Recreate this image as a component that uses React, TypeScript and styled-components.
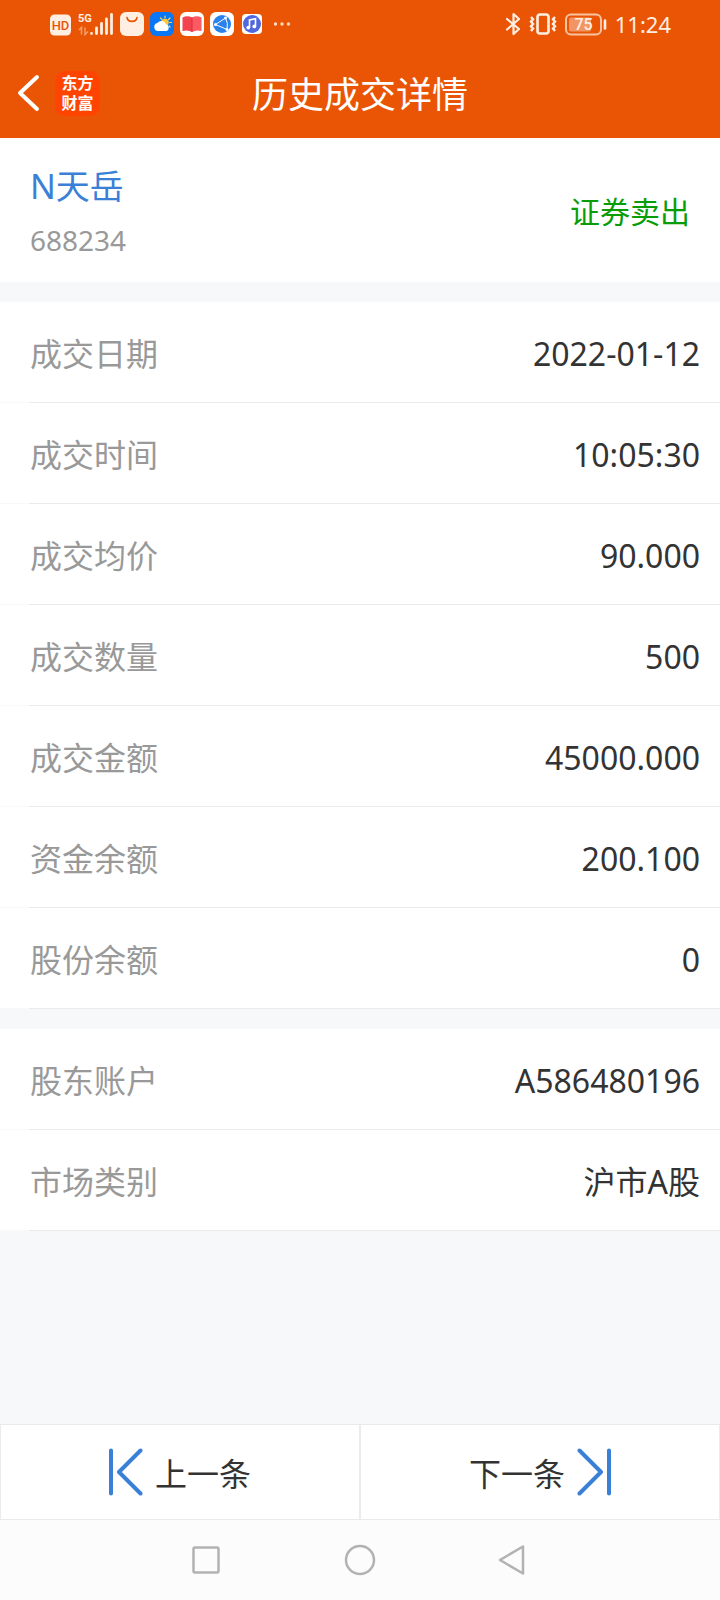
import React from "react";
import styled, { createGlobalStyle } from "styled-components";

const GlobalStyle = createGlobalStyle`
  *, *::before, *::after { box-sizing: border-box; }
  body {
    margin: 0;
    background: #f6f8fa;
    color: #333;
    font-family: "Noto Sans", "Noto Sans CJK SC", sans-serif;
  }
  button { font: inherit; color: inherit; cursor: pointer; }
  svg { display: block; flex: none; }
`;

const Screen = styled.div`
  display: flex;
  flex-direction: column;
  min-height: 100vh;
`;

const StatusBar = styled.div`
  display: flex;
  align-items: center;
  justify-content: space-between;
  height: 48px;
  padding: 0 49px 0 50px;
  background: #e95504;
  color: #ffeee2;
`;

const StatusGroup = styled.div<{ $gap: number }>`
  display: flex;
  align-items: center;
  gap: ${(p) => p.$gap}px;
`;

const Clock = styled.time`
  font-size: 22px;
  line-height: 24px;
`;

const Header = styled.header`
  display: grid;
  grid-template-columns: 1fr auto 1fr;
  align-items: center;
  height: 90px;
  padding: 0 16px;
  background: #e95504;
  color: #fff;
`;

const HeaderStart = styled.div`
  display: flex;
  align-items: center;
  gap: 15px;
`;

const PlainButton = styled.button`
  display: flex;
  align-items: center;
  justify-content: center;
  padding: 0;
  border: 0;
  background: none;
`;

const Brand = styled.div`
  display: flex;
  align-items: center;
  justify-content: center;
  width: 45px;
  height: 45px;
  border-radius: 10px;
  background: #ff4400;
  font-size: 16px;
  font-weight: 700;
  line-height: 20px;
  text-align: center;
`;

const Title = styled.h1`
  margin: 0;
  padding-top: 4px;
  font-size: 36px;
  font-weight: 400;
  line-height: 48px;
`;

const Main = styled.main`
  display: flex;
  flex: 1;
  flex-direction: column;
  gap: 20px;
`;

const Summary = styled.section`
  display: flex;
  align-items: center;
  justify-content: space-between;
  height: 144px;
  padding: 4px 30px 0;
  background: #fff;
`;

const StockName = styled.h2`
  margin: 0;
  color: #3a80d7;
  font-size: 34px;
  font-weight: 400;
  line-height: 56px;
`;

const StockCode = styled.p`
  margin: 0;
  color: #999;
  font-size: 28px;
  line-height: 52px;
`;

const Side = styled.strong`
  color: #099c09;
  font-size: 30px;
  font-weight: 400;
  line-height: 40px;
`;

const Details = styled.dl`
  margin: 0;
`;

const Row = styled.div`
  display: flex;
  align-items: center;
  justify-content: space-between;
  height: 101px;
  padding: 3px 20px 0 30px;
  border-bottom: 1px solid #ebebeb;
  border-image: linear-gradient(to right, #f9f9f9 30px, #ebebeb 30px) 1;
  background: #fff;
  font-size: 32px;
  line-height: 48px;
`;

const Label = styled.dt`
  color: #999;
`;

const Value = styled.dd`
  margin: 0;
`;

const Pager = styled.nav`
  display: flex;
`;

const PagerButton = styled.button`
  display: flex;
  flex: 1;
  align-items: center;
  justify-content: center;
  gap: 12px;
  height: 96px;
  padding: 0;
  border: 1px solid #ebebeb;
  background: #fff;
  font-size: 32px;
  line-height: 48px;
`;

const PagerText = styled.span`
  padding-top: 3px;
`;

const SystemBar = styled.nav`
  display: flex;
  justify-content: center;
  height: 80px;
  background: #fcfcfc;
`;

const SystemButton = styled(PlainButton)`
  width: 154px;
`;

const trade = [
  ["成交日期", "2022-01-12"],
  ["成交时间", "10:05:30"],
  ["成交均价", "90.000"],
  ["成交数量", "500"],
  ["成交金额", "45000.000"],
  ["资金余额", "200.100"],
  ["股份余额", "0"],
];

const account = [
  ["股东账户", "A586480196"],
  ["市场类别", "沪市A股"],
];

function DetailList({ items }: { items: string[][] }) {
  return (
    <Details>
      {items.map(([label, value]) => (
        <Row key={label}>
          <Label>{label}</Label>
          <Value>{value}</Value>
        </Row>
      ))}
    </Details>
  );
}

function HdIcon() {
  return (
    <svg width="22" height="24" viewBox="0 0 22 24">
      <rect x="0" y="2.500" width="21" height="21" rx="4.500" fill="#ffeee2" />
      <text x="10.500" y="18" textAnchor="middle" fontFamily="Roboto, sans-serif" fontSize="13" fontWeight="500" fill="#e95504">HD</text>
    </svg>
  );
}

function SignalIcon() {
  return (
    <svg width="36" height="24" viewBox="0 0 36 24">
      <text x="0" y="10" fontFamily="Roboto, sans-serif" fontSize="11" fontWeight="700" fill="#ffeee2">5G</text>
      <path d="M1 18l2.500-2.500v7M7 15.500v7l3-3" fill="none" stroke="#f39a66" strokeWidth="1.600" />
      <path d="M13.500 21.500v0M18.500 16v5.500M23.500 11.500v10M28.500 7v14.500M33.500 2.500v19" stroke="#ffeee2" strokeWidth="2.800" strokeLinecap="round" />
    </svg>
  );
}

function BagIcon() {
  return (
    <svg width="24" height="24" viewBox="0 0 24 24">
      <rect width="24" height="24" rx="6" fill="#ffeee2" />
      <path d="M7 5.500c1 5.200 9 5.200 10 0" fill="none" stroke="#e95504" strokeWidth="1.600" strokeLinecap="round" />
    </svg>
  );
}

function WeatherIcon() {
  return (
    <svg width="24" height="24" viewBox="0 0 24 24">
      <rect width="24" height="24" rx="6" fill="#0877f5" />
      <path d="M15 4v2M20 6l-1.500 1.500M10.500 6L12 7.500M19.500 10.500h2M19 14l1 1" stroke="#ffd35c" strokeWidth="1.200" strokeLinecap="round" />
      <circle cx="15" cy="10.500" r="3.700" fill="#ffc733" />
      <path d="M8 19a4 4 0 0 1-.6-7.900A4.800 4.800 0 0 1 16 12.300a3.500 3.500 0 0 1 .5 6.700z" fill="#fff" />
    </svg>
  );
}

function BookIcon() {
  return (
    <svg width="24" height="24" viewBox="0 0 24 24">
      <rect width="24" height="24" rx="6" fill="#fff" />
      <path d="M2.500 5.500Q7.500 3 12 5.500V20q-4-2.500-9.500-1z" fill="#f2434f" />
      <path d="M21.500 5.500Q16.500 3 12 5.500V20q4-2.500 9.500-1z" fill="#fa5a61" />
      <path d="M12 5.500V20" stroke="#d92d3c" strokeWidth="1" />
    </svg>
  );
}

function BrowserIcon() {
  return (
    <svg width="24" height="24" viewBox="0 0 24 24">
      <rect width="24" height="24" rx="6" fill="#fff" />
      <circle cx="12" cy="12" r="9" fill="#2a82ec" />
      <path d="M15.500 6L5.500 12.500 17 17.500M15.500 6Q18.500 11 17 17.500" fill="none" stroke="#fff" strokeWidth="1" />
      <g fill="#fff">
        <circle cx="15.500" cy="6" r="1.500" />
        <circle cx="5.500" cy="12.500" r="1.500" />
        <circle cx="17" cy="17.500" r="1.500" />
      </g>
    </svg>
  );
}

function MusicIcon() {
  return (
    <svg width="24" height="24" viewBox="0 0 24 24">
      <rect x="2" y="2" width="20" height="20" rx="4" fill="#fff" />
      <circle cx="12" cy="12" r="9" fill="#5068dc" />
      <path d="M9.500 15.500V8l6-1.300v7.500" fill="none" stroke="#fff" strokeWidth="1.600" />
      <circle cx="8.300" cy="15.600" r="1.900" fill="#fff" />
      <circle cx="14.300" cy="14.400" r="1.900" fill="#fff" />
    </svg>
  );
}

function MoreIcon() {
  return (
    <svg width="24" height="24" viewBox="0 0 24 24" fill="#ffd9c2">
      <circle cx="5.500" cy="12" r="1.700" />
      <circle cx="12" cy="12" r="1.700" />
      <circle cx="18.500" cy="12" r="1.700" />
    </svg>
  );
}

function BluetoothIcon() {
  return (
    <svg width="16" height="24" viewBox="0 0 16 24" fill="none" stroke="#ffeee2" strokeWidth="2.200" strokeLinejoin="round" strokeLinecap="round">
      <path d="M2 7L14 17l-5.500 5v-20L14 7 2 17.500" />
    </svg>
  );
}

function VibrateIcon() {
  return (
    <svg width="28" height="24" viewBox="0 0 28 24" fill="none" stroke="#ffeee2">
      <rect x="8.500" y="2.500" width="11" height="19" rx="2.500" strokeWidth="2.600" />
      <path d="M2 5l2 2.300-2 2.300 2 2.400-2 2.300 2 2.300L2 19M26 5l-2 2.300 2 2.300-2 2.400 2 2.300-2 2.300 2 2.400" strokeWidth="2.400" />
    </svg>
  );
}

function BatteryIcon() {
  return (
    <svg width="42" height="24" viewBox="0 0 42 24">
      <rect x="1" y="2.500" width="35" height="20" rx="5" fill="none" stroke="#f9c3a2" strokeWidth="2" />
      <rect x="4" y="5.500" width="22" height="14" rx="2" fill="#f29564" />
      <path d="M40 8.500v8" stroke="#ffeee2" strokeWidth="2.600" strokeLinecap="round" />
      <text x="18.500" y="18" textAnchor="middle" fontFamily="Roboto, sans-serif" fontSize="16" fontWeight="500" fill="#ffeee2">75</text>
    </svg>
  );
}

function BackIcon() {
  return (
    <svg width="24" height="40" viewBox="0 0 24 40" fill="none" stroke="#fff" strokeWidth="4" strokeLinecap="round" strokeLinejoin="round">
      <path d="M21 4L4 20l17 16" />
    </svg>
  );
}

function PreviousIcon() {
  return (
    <svg width="34" height="48" viewBox="0 0 34 48" fill="none" stroke="#3a80d7" strokeWidth="4" strokeLinecap="round" strokeLinejoin="round">
      <path d="M2 2.500v43M31.500 2.500L10 24l21.500 21.500" />
    </svg>
  );
}

function NextIcon() {
  return (
    <svg width="34" height="48" viewBox="0 0 34 48" fill="none" stroke="#3a80d7" strokeWidth="4" strokeLinecap="round" strokeLinejoin="round">
      <path d="M32 2.500v43M2.500 2.500L24 24 2.500 45.500" />
    </svg>
  );
}

export default function App() {
  return (
    <Screen>
      <GlobalStyle />
      <StatusBar>
        <StatusGroup $gap={6}>
          <HdIcon />
          <SignalIcon />
          <BagIcon />
          <WeatherIcon />
          <BookIcon />
          <BrowserIcon />
          <MusicIcon />
          <MoreIcon />
        </StatusGroup>
        <StatusGroup $gap={8}>
          <BluetoothIcon />
          <VibrateIcon />
          <BatteryIcon />
          <Clock>11:24</Clock>
        </StatusGroup>
      </StatusBar>
      <Header>
        <HeaderStart>
          <PlainButton type="button" aria-label="返回">
            <BackIcon />
          </PlainButton>
          <Brand>
            <span>东方<br />财富</span>
          </Brand>
        </HeaderStart>
        <Title>历史成交详情</Title>
      </Header>
      <Main>
        <Summary>
          <div>
            <StockName>N天岳</StockName>
            <StockCode>688234</StockCode>
          </div>
          <Side>证券卖出</Side>
        </Summary>
        <DetailList items={trade} />
        <DetailList items={account} />
      </Main>
      <Pager>
        <PagerButton type="button">
          <PreviousIcon />
          <PagerText>上一条</PagerText>
        </PagerButton>
        <PagerButton type="button">
          <PagerText>下一条</PagerText>
          <NextIcon />
        </PagerButton>
      </Pager>
      <SystemBar>
        <SystemButton type="button" aria-label="最近任务">
          <svg width="28" height="28" viewBox="0 0 28 28" fill="none" stroke="#b2b2b2" strokeWidth="2.500">
            <rect x="1.500" y="1.500" width="25" height="25" rx="1.500" />
          </svg>
        </SystemButton>
        <SystemButton type="button" aria-label="主屏幕">
          <svg width="32" height="32" viewBox="0 0 32 32" fill="none" stroke="#b2b2b2" strokeWidth="2.500">
            <circle cx="16" cy="16" r="14" />
          </svg>
        </SystemButton>
        <SystemButton type="button" aria-label="返回上一页">
          <svg width="32" height="32" viewBox="0 0 32 32" fill="none" stroke="#b2b2b2" strokeWidth="2.500" strokeLinejoin="round">
            <path d="M25 2.500v27L2 16z" />
          </svg>
        </SystemButton>
      </SystemBar>
    </Screen>
  );
}
